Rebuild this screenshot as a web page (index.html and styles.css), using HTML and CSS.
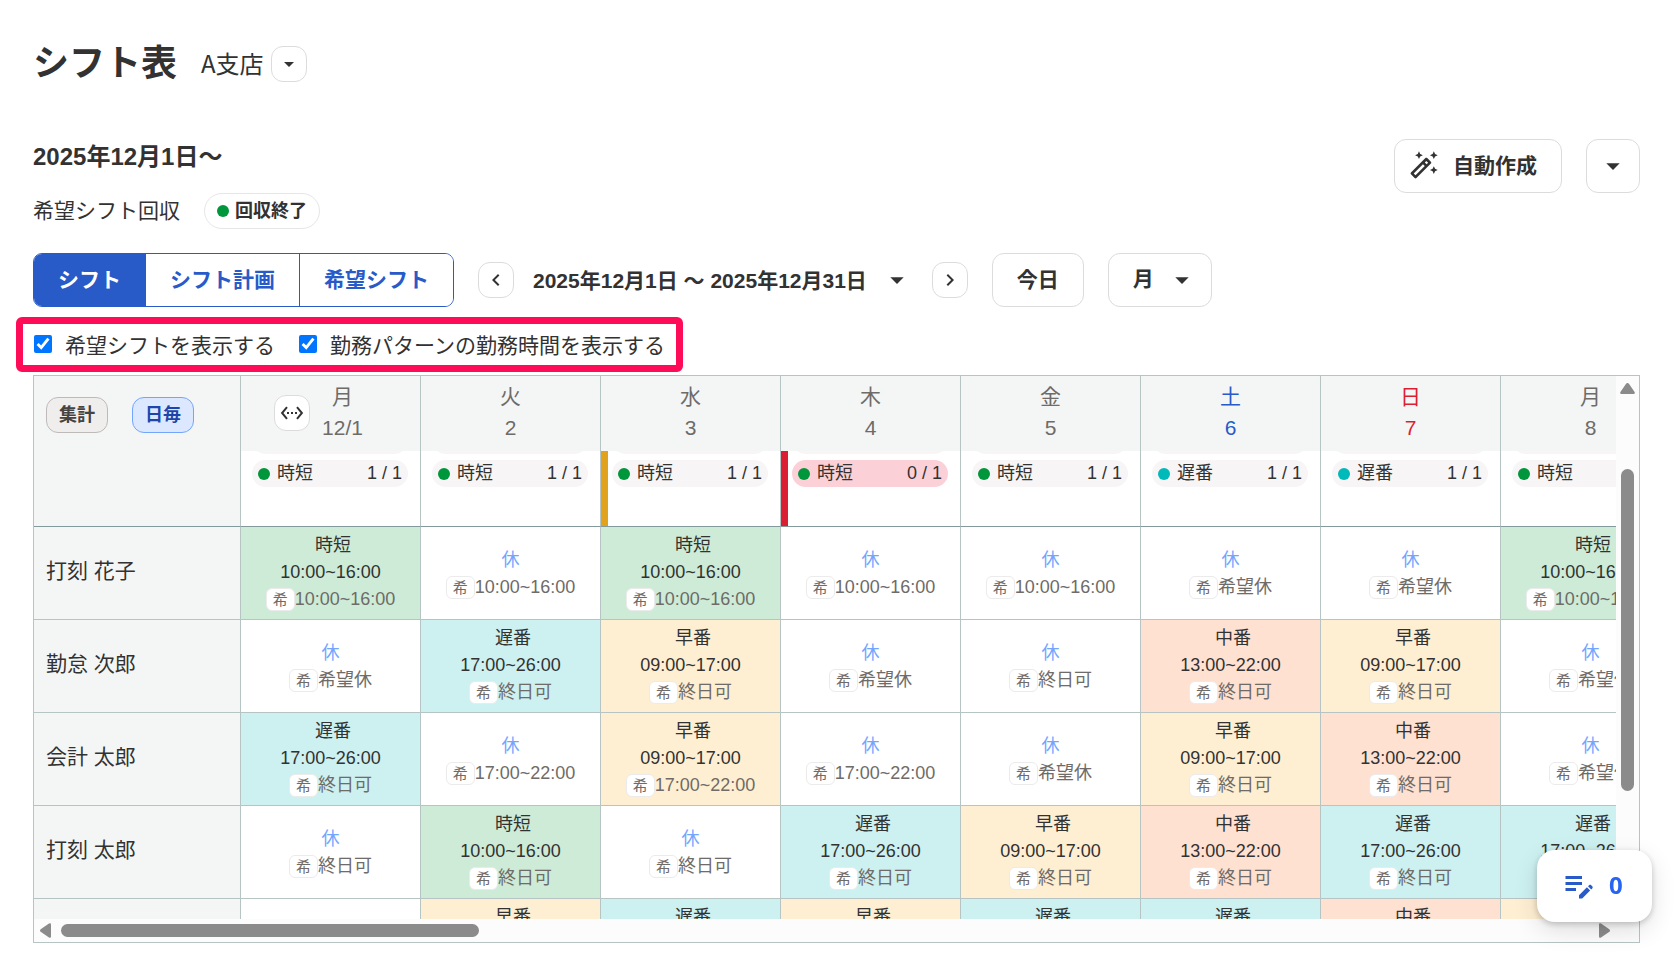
FILE: index.html
```html
<!DOCTYPE html>
<html lang="ja">

<head>
    <meta charset="UTF-8">
    <meta name="viewport" content="width=device-width, initial-scale=1.0">
    <title>シフト表</title>
    <link rel="stylesheet" href="styles.css">
</head>

<body>
    <header class="page-header">
        <h1>シフト表</h1>
        <div class="branch">
            <span>A支店</span>
            <button class="icon-btn" type="button" aria-label="支店を選択">
                <svg class="arrow-small" viewBox="0 0 24 24"><path d="M7 10l5 5 5-5z"/></svg>
            </button>
        </div>
    </header>

    <main>
        <section class="overview">
            <div>
                <h2>2025年12月1日〜</h2>
                <div class="status">
                    <span>希望シフト回収</span>
                    <span class="status-pill"><i class="dot green-dot"></i><span>回収終了</span></span>
                </div>
            </div>
            <div class="actions">
                <button class="btn auto-btn" type="button">
                    <svg class="wand" viewBox="0 0 24 24"><path d="M20 7l.94-2.06L23 4l-2.06-.94L20 1l-.94 2.06L17 4l2.06.94zM8.5 7l.94-2.06L11.5 4l-2.06-.94L8.5 1l-.94 2.06L5.5 4l2.06.94zM20 12.5l-.94 2.06-2.06.94 2.06.94.94 2.06.94-2.06L23 15.5l-2.06-.94zM17.71 9.12l-2.83-2.83C14.68 6.1 14.43 6 14.17 6c-.26 0-.51.1-.71.29L2.29 17.46a.996.996 0 000 1.41l2.83 2.83c.2.2.45.3.71.3s.51-.1.71-.29l11.17-11.17c.39-.39.39-1.03 0-1.42zm-3.54-.7l1.41 1.41L14.41 11 13 9.59l1.17-1.17zM5.83 19.59l-1.41-1.41L11.59 11 13 12.41l-7.17 7.18z"/></svg>
                    <span class="btn-label">自動作成</span>
                </button>
                <button class="btn more-btn" type="button" aria-label="その他の操作">
                    <svg class="arrow" viewBox="0 0 24 24"><path d="M7 10l5 5 5-5z"/></svg>
                </button>
            </div>
        </section>

        <nav class="toolbar">
            <div class="tabs">
                <button class="tab active" type="button">シフト</button>
                <button class="tab" type="button">シフト計画</button>
                <button class="tab" type="button">希望シフト</button>
            </div>
            <div class="period">
                <button class="icon-btn" type="button" aria-label="前の期間">
                    <svg class="chevron" viewBox="0 0 24 24"><path d="M15.41 7.41L14 6l-6 6 6 6 1.41-1.41L10.83 12z"/></svg>
                </button>
                <button class="period-btn" type="button">
                    <span class="btn-label">2025年12月1日 〜 2025年12月31日</span>
                    <svg class="arrow" viewBox="0 0 24 24"><path d="M7 10l5 5 5-5z"/></svg>
                </button>
                <button class="icon-btn" type="button" aria-label="次の期間">
                    <svg class="chevron" viewBox="0 0 24 24"><path d="M8.59 16.59L10 18l6-6-6-6-1.41 1.41L13.17 12z"/></svg>
                </button>
            </div>
            <button class="btn today-btn" type="button">今日</button>
            <div class="unit">
                <select class="btn unit-select" aria-label="表示単位">
                    <option>月</option>
                    <option>週</option>
                </select>
                <svg class="arrow" viewBox="0 0 24 24"><path d="M7 10l5 5 5-5z"/></svg>
            </div>
        </nav>

        <div class="display-options">
            <label for="show-request"><input type="checkbox" id="show-request" checked>希望シフトを表示する</label>
            <label for="show-time"><input type="checkbox" id="show-time" checked>勤務パターンの勤務時間を表示する</label>
        </div>

        <div class="sheet">
            <div class="sheet-view">
                <table class="shift-table">
                    <thead>
                        <tr>
                            <th class="corner">
                                <div class="chips">
                                    <button class="chip" type="button">集計</button>
                                    <button class="chip selected" type="button">日毎</button>
                                </div>
                            </th>
                            <th>
                                <div class="day first-day">
                                    <button class="icon-btn" type="button" aria-label="列幅を広げる">
                                        <svg class="expand" viewBox="0 0 24 24"><path d="M7.77 6.76L6.23 5.48.82 12l5.41 6.52 1.54-1.28L3.42 12l4.35-5.24zM7 13h2v-2H7v2zm10-2h-2v2h2v-2zm-6 2h2v-2h-2v2zm6.77-7.52l-1.54 1.28L20.58 12l-4.35 5.24 1.54 1.28L23.18 12l-5.41-6.52z"/></svg>
                                    </button>
                                    <div>月<br>12/1</div>
                                </div>
                                <div class="counts">
                                    <div class="count"></div>
                                    <div class="count"><i class="dot green-dot"></i>時短<span>1 / 1</span></div>
                                </div>
                            </th>
                            <th>
                                <div class="day">火<br>2</div>
                                <div class="counts">
                                    <div class="count"></div>
                                    <div class="count"><i class="dot green-dot"></i>時短<span>1 / 1</span></div>
                                </div>
                            </th>
                            <th>
                                <div class="day">水<br>3</div>
                                <div class="counts warning">
                                    <div class="count"></div>
                                    <div class="count"><i class="dot green-dot"></i>時短<span>1 / 1</span></div>
                                </div>
                            </th>
                            <th>
                                <div class="day">木<br>4</div>
                                <div class="counts error">
                                    <div class="count"></div>
                                    <div class="count short"><i class="dot green-dot"></i>時短<span>0 / 1</span></div>
                                </div>
                            </th>
                            <th>
                                <div class="day">金<br>5</div>
                                <div class="counts">
                                    <div class="count"></div>
                                    <div class="count"><i class="dot green-dot"></i>時短<span>1 / 1</span></div>
                                </div>
                            </th>
                            <th>
                                <div class="day saturday">土<br>6</div>
                                <div class="counts">
                                    <div class="count"></div>
                                    <div class="count"><i class="dot teal-dot"></i>遅番<span>1 / 1</span></div>
                                </div>
                            </th>
                            <th>
                                <div class="day sunday">日<br>7</div>
                                <div class="counts">
                                    <div class="count"></div>
                                    <div class="count"><i class="dot teal-dot"></i>遅番<span>1 / 1</span></div>
                                </div>
                            </th>
                            <th>
                                <div class="day">月<br>8</div>
                                <div class="counts">
                                    <div class="count"></div>
                                    <div class="count"><i class="dot green-dot"></i>時短<span>1 / 1</span></div>
                                </div>
                            </th>
                        </tr>
                    </thead>
                    <tbody>
                        <tr>
                            <th class="name">打刻 花子</th>
                            <td class="short-time"><p class="pattern">時短</p><p>10:00~16:00</p><p class="request"><b>希</b>10:00~16:00</p></td>
                            <td><p class="off">休</p><p class="request"><b>希</b>10:00~16:00</p></td>
                            <td class="short-time"><p class="pattern">時短</p><p>10:00~16:00</p><p class="request"><b>希</b>10:00~16:00</p></td>
                            <td><p class="off">休</p><p class="request"><b>希</b>10:00~16:00</p></td>
                            <td><p class="off">休</p><p class="request"><b>希</b>10:00~16:00</p></td>
                            <td><p class="off">休</p><p class="request"><b>希</b>希望休</p></td>
                            <td><p class="off">休</p><p class="request"><b>希</b>希望休</p></td>
                            <td class="short-time"><p class="pattern">時短</p><p>10:00~16:00</p><p class="request"><b>希</b>10:00~16:00</p></td>
                        </tr>
                        <tr>
                            <th class="name">勤怠 次郎</th>
                            <td><p class="off">休</p><p class="request"><b>希</b>希望休</p></td>
                            <td class="late"><p class="pattern">遅番</p><p>17:00~26:00</p><p class="request"><b>希</b>終日可</p></td>
                            <td class="early"><p class="pattern">早番</p><p>09:00~17:00</p><p class="request"><b>希</b>終日可</p></td>
                            <td><p class="off">休</p><p class="request"><b>希</b>希望休</p></td>
                            <td><p class="off">休</p><p class="request"><b>希</b>終日可</p></td>
                            <td class="middle"><p class="pattern">中番</p><p>13:00~22:00</p><p class="request"><b>希</b>終日可</p></td>
                            <td class="early"><p class="pattern">早番</p><p>09:00~17:00</p><p class="request"><b>希</b>終日可</p></td>
                            <td><p class="off">休</p><p class="request"><b>希</b>希望休</p></td>
                        </tr>
                        <tr>
                            <th class="name">会計 太郎</th>
                            <td class="late"><p class="pattern">遅番</p><p>17:00~26:00</p><p class="request"><b>希</b>終日可</p></td>
                            <td><p class="off">休</p><p class="request"><b>希</b>17:00~22:00</p></td>
                            <td class="early"><p class="pattern">早番</p><p>09:00~17:00</p><p class="request"><b>希</b>17:00~22:00</p></td>
                            <td><p class="off">休</p><p class="request"><b>希</b>17:00~22:00</p></td>
                            <td><p class="off">休</p><p class="request"><b>希</b>希望休</p></td>
                            <td class="early"><p class="pattern">早番</p><p>09:00~17:00</p><p class="request"><b>希</b>終日可</p></td>
                            <td class="middle"><p class="pattern">中番</p><p>13:00~22:00</p><p class="request"><b>希</b>終日可</p></td>
                            <td><p class="off">休</p><p class="request"><b>希</b>希望休</p></td>
                        </tr>
                        <tr>
                            <th class="name">打刻 太郎</th>
                            <td><p class="off">休</p><p class="request"><b>希</b>終日可</p></td>
                            <td class="short-time"><p class="pattern">時短</p><p>10:00~16:00</p><p class="request"><b>希</b>終日可</p></td>
                            <td><p class="off">休</p><p class="request"><b>希</b>終日可</p></td>
                            <td class="late"><p class="pattern">遅番</p><p>17:00~26:00</p><p class="request"><b>希</b>終日可</p></td>
                            <td class="early"><p class="pattern">早番</p><p>09:00~17:00</p><p class="request"><b>希</b>終日可</p></td>
                            <td class="middle"><p class="pattern">中番</p><p>13:00~22:00</p><p class="request"><b>希</b>終日可</p></td>
                            <td class="late"><p class="pattern">遅番</p><p>17:00~26:00</p><p class="request"><b>希</b>終日可</p></td>
                            <td class="late"><p class="pattern">遅番</p><p>17:00~26:00</p></td>
                        </tr>
                        <tr>
                            <th class="name"></th>
                            <td></td>
                            <td class="early"><p class="pattern">早番</p></td>
                            <td class="late"><p class="pattern">遅番</p></td>
                            <td class="early"><p class="pattern">早番</p></td>
                            <td class="late"><p class="pattern">遅番</p></td>
                            <td class="late"><p class="pattern">遅番</p></td>
                            <td class="middle"><p class="pattern">中番</p></td>
                            <td class="early"></td>
                        </tr>
                    </tbody>
                </table>
            </div>
            <div class="scroll-y">
                <svg viewBox="0 0 15 11"><path d="M7.500 0q1 0 1.600 1l5.500 8q.8 2-1 2H1.400q-1.800 0-1-2l5.500-8q.6-1 1.600-1z"/></svg>
                <div class="thumb"></div>
            </div>
            <div class="scroll-x">
                <svg viewBox="0 0 11 15"><path d="M0 7.500q0-1 1-1.600l8-5.500q2-.8 2 1v12.200q0 1.800-2 1l-8-5.500q-1-.6-1-1.600z"/></svg>
                <div class="thumb"></div>
                <svg viewBox="0 0 11 15"><path d="M11 7.500q0-1-1-1.600l-8-5.500q-2-.8-2 1v12.200q0 1.800 2 1l8-5.500q1-.6 1-1.600z"/></svg>
            </div>
        </div>
    </main>

    <button class="edit-count" type="button">
        <svg viewBox="0 0 24 24"><path d="M3 10h11v2H3v-2zm0-2h11V6H3v2zm0 8h7v-2H3v2zm15.010-3.130l.71-.71c.39-.39 1.020-.39 1.410 0l.71.71c.39.39.39 1.020 0 1.410l-.71.71-2.120-2.120zm-.71.71l-5.300 5.300V21h2.120l5.300-5.300-2.120-2.120z"/></svg>
        <span class="btn-label">0</span>
    </button>
</body>

</html>
```
FILE: styles.css
```css
* {
    box-sizing: border-box;
}

body {
    margin: 0;
    padding: 37px 36px 27px 33px;
    height: 100vh;
    display: flex;
    flex-direction: column;
    background-color: #fff;
    color: #323232;
    font-family: "Liberation Sans", "Noto Sans CJK JP", sans-serif;
    font-size: 21px;
    overflow: hidden;
}

h1,
h2,
p {
    margin: 0;
}

button,
select {
    font-family: inherit;
    font-size: 21px;
    font-weight: bold;
    color: inherit;
    cursor: pointer;
}

svg {
    display: block;
    fill: currentColor;
    flex: none;
}

main {
    flex: 1;
    min-height: 0;
    display: flex;
    flex-direction: column;
}

/* Page title */
.page-header {
    display: flex;
    align-items: center;
    gap: 24px;
    margin-bottom: 48px;
}

h1 {
    font-size: 36px;
    line-height: 54px;
}

.branch {
    display: flex;
    align-items: center;
    gap: 7px;
    font-family: "Noto Sans CJK JP", sans-serif;
    font-size: 24px;
    line-height: 36px;
}

.branch span {
    padding-bottom: 2px;
}

/* Shared buttons */
.icon-btn {
    width: 36px;
    height: 36px;
    padding: 0;
    display: flex;
    justify-content: center;
    align-items: center;
    background-color: #fff;
    border: 1px solid #dcdcdc;
    border-radius: 12px;
}

.btn {
    height: 54px;
    padding: 0 24px 4px;
    background-color: #fff;
    border: 1px solid #dcdcdc;
    border-radius: 12px;
}

.btn-label {
    padding-bottom: 4px;
}

.arrow {
    width: 32px;
    height: 32px;
}

.arrow-small {
    width: 24px;
    height: 24px;
}

.chevron,
.expand {
    width: 24px;
    height: 24px;
}

/* Period and collection status */
.overview {
    display: flex;
    justify-content: space-between;
    align-items: flex-start;
    margin-bottom: 24px;
}

h2 {
    font-size: 24px;
    line-height: 36px;
    margin-bottom: 18px;
}

.status {
    display: flex;
    align-items: center;
    gap: 24px;
}

.status span {
    padding-bottom: 4px;
}

.status .status-pill {
    display: flex;
    align-items: center;
    gap: 6px;
    height: 36px;
    padding: 0 12px;
    border: 1px solid #e6e6e6;
    border-radius: 18px;
    font-size: 18px;
    font-weight: bold;
}

.dot {
    width: 12px;
    height: 12px;
    border-radius: 50%;
}

.green-dot {
    background-color: #00963c;
}

.teal-dot {
    background-color: #00b9b9;
}

.actions {
    display: flex;
    gap: 24px;
}

.auto-btn {
    display: flex;
    align-items: center;
    gap: 14px;
    padding: 0 24px 0 13px;
}

.wand {
    width: 31px;
    height: 31px;
    margin-bottom: 2px;
}

.more-btn {
    width: 54px;
    padding: 0;
    display: flex;
    justify-content: center;
    align-items: center;
}

/* Toolbar */
.toolbar {
    display: flex;
    align-items: center;
    gap: 24px;
    margin-bottom: 10px;
}

.tabs {
    display: flex;
    height: 54px;
    border: 1px solid #285ac8;
    border-radius: 9px;
    overflow: hidden;
}

.tab {
    padding: 0 24px 4px;
    background-color: #fff;
    color: #285ac8;
    border: none;
}

.tab + .tab {
    border-left: 1px solid #285ac8;
}

.tab.active {
    background-color: #285ac8;
    color: #fff;
}

.period {
    display: flex;
    align-items: center;
    gap: 19px;
}

.period-btn {
    display: flex;
    align-items: center;
    gap: 14px;
    padding: 0;
    background: none;
    border: none;
}

.period-btn .btn-label {
    padding-bottom: 2px;
}

.unit {
    position: relative;
}

.unit-select {
    appearance: none;
    width: 104px;
}

.unit .arrow {
    position: absolute;
    top: 11px;
    right: 14px;
    pointer-events: none;
}

/* Display options */
.display-options {
    align-self: flex-start;
    display: flex;
    align-items: center;
    gap: 24px;
    height: 55px;
    margin: 0 0 3px -17px;
    padding: 0 11px 2px;
    border: 7px solid #ff0c59;
    border-radius: 6px;
}

.display-options label {
    display: flex;
    align-items: center;
    gap: 13px;
    white-space: nowrap;
}

.display-options input {
    width: 18px;
    height: 18px;
    margin: 0;
}

/* Shift sheet with its scroll bars */
.sheet {
    flex: 1;
    min-height: 0;
    display: grid;
    grid-template-columns: minmax(0, 1fr) 23px;
    grid-template-rows: minmax(0, 1fr) 23px;
    border: 1px solid #b7c4c4;
    background-color: #fcfcfc;
}

.sheet-view {
    overflow: hidden;
    background-color: #fff;
}

.shift-table {
    width: 1647px;
    table-layout: fixed;
    border-collapse: separate;
    border-spacing: 0;
    font-size: 18px;
    line-height: 27px;
}

.shift-table th,
.shift-table td {
    width: 180px;
    padding: 0;
    border-right: 1px solid #b7c4c4;
    border-bottom: 1px solid #b7c4c4;
    font-weight: normal;
    text-align: center;
}

.shift-table td {
    height: 93px;
    padding-top: 2px;
}

.shift-table thead th {
    height: 151px;
    border-bottom-color: #829a9b;
    vertical-align: top;
}

.shift-table .corner {
    width: 207px;
    background-color: #f4f6f6;
}

.shift-table .name {
    padding: 0 0 5px 12px;
    background-color: #f4f6f6;
    font-size: 21px;
    text-align: left;
}

.chips {
    display: flex;
    gap: 24px;
    padding: 21px 12px;
}

.chip {
    height: 36px;
    padding: 0 12px 4px;
    background-color: #f0eeec;
    border: 1px solid #bfbaba;
    border-radius: 12px;
    color: #464343;
    font-size: 18px;
}

.chip.selected {
    background-color: #dce8ff;
    border-color: #73a5ff;
    color: #1e46aa;
}

.day {
    height: 75px;
    padding: 5px 0;
    background-color: #f4f6f6;
    color: #6e6b68;
    font-size: 21px;
    line-height: 31px;
}

.first-day {
    display: flex;
    justify-content: center;
    align-items: flex-start;
    gap: 12px;
    padding-right: 24px;
}

.first-day .icon-btn {
    margin-top: 14px;
    color: #323232;
}

.saturday {
    color: #285ac8;
}

.sunday {
    color: #dc1e32;
}

.counts {
    height: 75px;
    padding: 0 12px 0 11px;
    overflow: hidden;
}

.counts.warning {
    box-shadow: inset 7px 0 #e0a31b;
}

.counts.error {
    box-shadow: inset 7px 0 #dc1e32;
}

.count {
    display: flex;
    align-items: center;
    gap: 7px;
    height: 27px;
    margin-bottom: 6px;
    padding: 0 6px;
    background-color: #f7f5f6;
    border-radius: 14px;
}

/* The list is scrolled, so only the lower edge of the first item shows */
.count:first-child {
    margin-top: -24px;
}

.count.short {
    background-color: #fbd1d7;
}

.count span {
    margin-left: auto;
}

.shift-table .short-time,
.shift-table .late,
.shift-table .early,
.shift-table .middle {
    padding: 5px 0 0;
    vertical-align: top;
}

.short-time {
    background-color: #cdebd7;
}

.late {
    background-color: #cdf0f0;
}

.early {
    background-color: #ffefd2;
}

.middle {
    background-color: #ffe1d2;
}

.pattern {
    padding-left: 5px;
}

.off {
    color: #73a5ff;
}

.request {
    display: flex;
    justify-content: center;
    align-items: center;
    color: #6e6b68;
}

.request b {
    width: 29px;
    height: 23px;
    background-color: #fff;
    border: 1px solid #ebebeb;
    border-radius: 6px;
    font-size: 15px;
    font-weight: normal;
    line-height: 21px;
}

.scroll-y {
    display: flex;
    flex-direction: column;
    align-items: center;
    padding-top: 7px;
    color: #8b8b8b;
}

.scroll-y svg {
    width: 15px;
    height: 11px;
}

.scroll-y .thumb {
    width: 13px;
    height: 60%;
    margin-top: 75px;
    border-radius: 7px;
    background-color: #8b8b8b;
}

.scroll-x {
    display: flex;
    align-items: center;
    padding: 0 6px;
    color: #8b8b8b;
}

.scroll-x svg {
    width: 11px;
    height: 15px;
}

.scroll-x .thumb {
    width: 418px;
    height: 13px;
    margin: 0 auto 0 10px;
    border-radius: 7px;
    background-color: #8b8b8b;
}

/* Floating counter of unsaved edits */
.edit-count {
    position: fixed;
    right: 24px;
    bottom: 48px;
    width: 115px;
    height: 72px;
    padding: 0 24px;
    display: flex;
    align-items: center;
    gap: 12px;
    background-color: #fff;
    border: none;
    border-radius: 18px;
    box-shadow: 0 2px 6px rgba(0, 0, 0, 0.2), 0 8px 24px rgba(0, 0, 0, 0.12);
    color: #2864f0;
    font-family: "Noto Sans", sans-serif;
    font-size: 24px;
}

.edit-count svg {
    width: 36px;
    height: 36px;
    margin-bottom: 2px;
    color: #285ac8;
}
```
